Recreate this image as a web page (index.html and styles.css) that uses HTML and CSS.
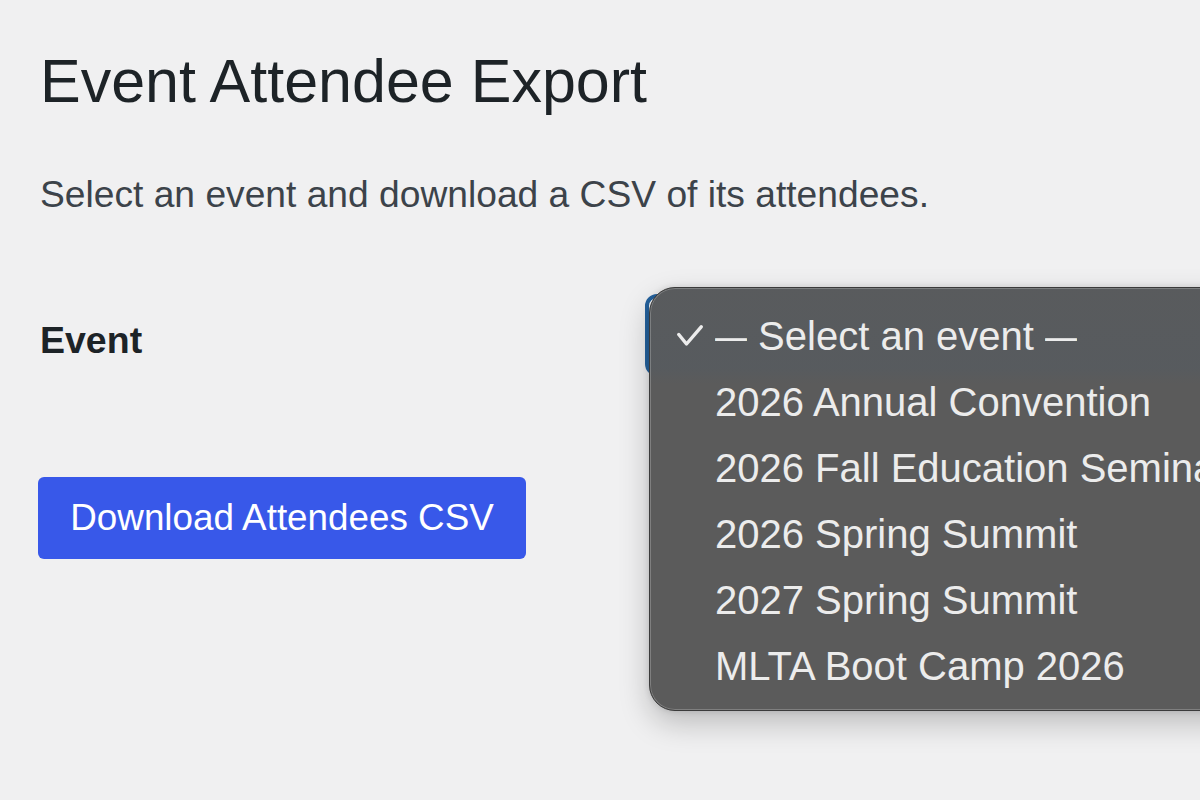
FILE: index.html
```html
<!DOCTYPE html>
<html lang="en">
<head>
<meta charset="utf-8">
<title>Event Attendee Export</title>
<link rel="stylesheet" href="styles.css">
</head>
<body>
<div class="wrap">
  <h1 class="title">Event Attendee Export</h1>
  <p class="intro">Select an event and download a CSV of its attendees.</p>
  <div class="form-row">
    <label class="field-label" for="event">Event</label>
    <div class="field">
      <div class="select" id="event"></div>
      <ul class="menu">
        <li class="item selected">
          <svg class="check" width="26" height="22" viewBox="0 0 26 22"><path d="M1.8 9.5 L9.5 19 L24.2 1.8" fill="none" stroke="#ececec" stroke-width="3.4" stroke-linecap="round" stroke-linejoin="round"/></svg>
          <span class="dash">—</span> Select an event <span class="dash">—</span>
        </li>
        <li class="item">2026 Annual Convention</li>
        <li class="item">2026 Fall Education Seminar</li>
        <li class="item">2026 Spring Summit</li>
        <li class="item">2027 Spring Summit</li>
        <li class="item">MLTA Boot Camp 2026</li>
      </ul>
    </div>
  </div>
  <button class="btn" type="button">Download Attendees CSV</button>
</div>
</body>
</html>
```

FILE: styles.css
```css
html, body {
  margin: 0;
  padding: 0;
}
body {
  width: 1200px;
  height: 800px;
  overflow: hidden;
  background: #f0f0f1;
  font-family: "Liberation Sans", Arial, Helvetica, sans-serif;
  color: #1d2327;
}
.wrap {
  padding: 45px 0 0 40px;
}
.title {
  margin: 0;
  font-size: 61px;
  font-weight: 400;
  line-height: 72px;
  color: #1d2327;
}
.intro {
  margin: 50px 0 0 0;
  font-size: 37.2px;
  line-height: 54px;
  color: #3c434a;
}
.form-row {
  margin-top: 73px;
  display: grid;
  grid-template-columns: 605px 1fr;
  align-items: start;
}
.field-label {
  padding-top: 23px;
  font-size: 37.5px;
  line-height: 47px;
  font-weight: 700;
  color: #1d2327;
}
.field {
  position: relative;
  height: 82px;
}
.select {
  width: 520px;
  height: 82px;
  border: 4px solid #25639f;
  border-radius: 12px;
  background: #ffffff;
  box-sizing: border-box;
}
.menu {
  position: absolute;
  top: -7px;
  left: 4px;
  width: 640px;
  margin: 0;
  padding: 15px 0 11px 0;
  list-style: none;
  box-sizing: border-box;
  background:
    linear-gradient(180deg, rgba(70, 90, 110, 0.10) 0px, rgba(70, 90, 110, 0.18) 80px, rgba(70, 90, 110, 0) 96px),
    #5b5b5b;
  border: 1px solid #3b3b3b;
  border-radius: 26px;
  box-shadow: inset 0 0 0 1px rgba(255, 255, 255, 0.22), 0 12px 30px rgba(0, 0, 0, 0.22), 0 0 6px rgba(0, 0, 0, 0.12);
  z-index: 2;
}
.item {
  position: relative;
  padding-left: 65px;
  font-size: 40px;
  line-height: 66px;
  color: #ececec;
  white-space: nowrap;
}
.dash {
  display: inline-block;
  transform: scaleX(0.8);
  margin: 0 -4px;
}
.check {
  position: absolute;
  left: 27px;
  top: 22px;
}
.btn {
  display: block;
  margin-top: 101px;
  margin-left: -2px;
  width: 488px;
  height: 82px;
  padding: 0;
  border: 0;
  border-radius: 6px;
  background: #3858e9;
  color: #ffffff;
  font-family: "Liberation Sans", Arial, Helvetica, sans-serif;
  font-size: 36.8px;
  text-align: center;
}
```
